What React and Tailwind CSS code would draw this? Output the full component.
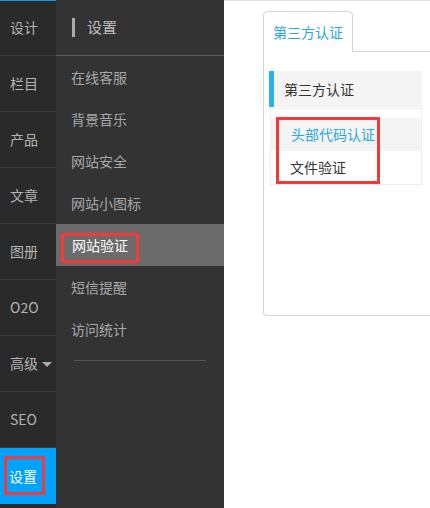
const font = { fontFamily: '"Noto Sans CJK SC", "Noto Sans", sans-serif' };

const mainNav = ['设计', '栏目', '产品', '文章', '图册', 'O2O', '高级', 'SEO'];
const subNav = ['在线客服', '背景音乐', '网站安全', '网站小图标', '网站验证', '短信提醒', '访问统计'];

export default function App() {
  return (
    <div className="flex w-[430px] h-[508px] overflow-hidden bg-white" style={font}>
      {/* main nav */}
      <div className="relative w-[56px] shrink-0 bg-[#2a2a2a] flex flex-col">
        <div className="absolute top-0 left-0 w-full h-[1px] bg-[#0a9ff0]" />
        {mainNav.map((label) => (
          <div
            key={label}
            className="h-[56px] shrink-0 border-b border-[#3b3b3b] flex items-center pl-[10px] text-[14px] text-[#b4b4b4]"
          >
            {label}
            {label === '高级' && (
              <span className="ml-[4px] mt-[1px] w-0 h-0 border-l-[5px] border-r-[5px] border-t-[5px] border-l-transparent border-r-transparent border-t-[#aaa]" />
            )}
          </div>
        ))}
        <div className="relative h-[56px] shrink-0 bg-[#00a2ff] flex items-center pl-[9px] text-[14px] text-white">
          设置
          <div className="absolute left-[4px] top-[8px] w-[41px] h-[39px] border-[3px] border-[#f23a3a]" />
        </div>
      </div>

      {/* sub nav */}
      <div className="w-[168px] shrink-0 bg-[#333333] flex flex-col">
        <div className="h-[56px] shrink-0 border-b border-[#5c5c5c] flex items-center pl-[16px]">
          <span className="w-[3px] h-[19px] bg-[#aaa] mr-[12px]" />
          <span className="text-[15px] text-[#bdbdbd]">设置</span>
        </div>
        {subNav.map((label) =>
          label === '网站验证' ? (
            <div key={label} className="relative h-[42px] shrink-0 bg-[#6b6b6b] flex items-center pl-[16px] text-[14px] text-white">
              {label}
              <div className="absolute left-[5px] top-[9px] w-[78px] h-[30px] border-[3px] border-[#f23a3a]" />
            </div>
          ) : (
            <div key={label} className="h-[42px] shrink-0 flex items-center pl-[15px] text-[14px] text-[#a8a8a8]">
              {label}
            </div>
          )
        )}
        <div className="mt-[10px] mx-[18px] h-[1px] bg-[#555]" />
      </div>

      {/* content */}
      <div className="flex-1 border-t border-[#e2e2e2] overflow-hidden">
        <div className="ml-[39px] mt-[10px] w-[190px]">
          <div className="flex h-[41px]">
            <div className="w-[90px] border border-b-0 border-[#d6d6d6] rounded-t-[5px] bg-white flex items-center pl-[9px] text-[14px] text-[#2aa7e3]">
              第三方认证
            </div>
            <div className="flex-1 border-b border-[#d6d6d6]" />
          </div>
          <div className="h-[264px] border border-t-0 border-[#d6d6d6] rounded-b-[4px] pt-[19px] pl-[5px]">
            <div className="w-[153px] h-[36px] bg-[#f4f4f4] flex items-center">
              <span className="w-[5px] h-full bg-[#2ab0ef]" />
              <span className="pl-[10px] text-[14px] text-[#333]">第三方认证</span>
            </div>
            <div className="relative ml-[1px] w-[152px] mt-[1px] border border-[#eeeeee] pt-[9px]">
              <div className="h-[33px] bg-[#f4f4f4] flex items-center pl-[20px] text-[14px] text-[#2aa7e3]">
                头部代码认证
              </div>
              <div className="h-[33px] bg-white flex items-center pl-[19px] text-[14px] text-[#333]">
                文件验证
              </div>
              <div className="absolute left-[5px] top-[8px] w-[104px] h-[67px] border-[3px] border-[#f23a3a]" />
            </div>
          </div>
        </div>
      </div>
    </div>
  );
}
